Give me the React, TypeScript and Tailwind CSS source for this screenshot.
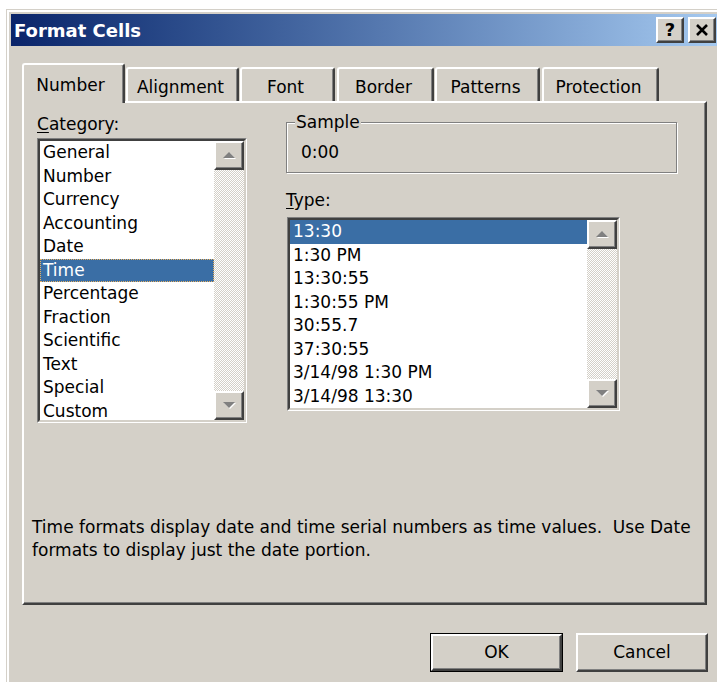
import type { ReactNode } from 'react';

const CATEGORIES = [
  'General',
  'Number',
  'Currency',
  'Accounting',
  'Date',
  'Time',
  'Percentage',
  'Fraction',
  'Scientific',
  'Text',
  'Special',
  'Custom',
];

const TIME_TYPES = [
  '13:30',
  '1:30 PM',
  '13:30:55',
  '1:30:55 PM',
  '30:55.7',
  '37:30:55',
  '3/14/98 1:30 PM',
  '3/14/98 13:30',
];

const TABS = [
  { label: 'Number', width: 'w-[103px]', gap: '' },
  { label: 'Alignment', width: 'w-[113px]', gap: 'ml-[1px]' },
  { label: 'Font', width: 'w-[95px]', gap: 'ml-[1px]' },
  { label: 'Border', width: 'w-[97px]', gap: 'ml-[2px]' },
  { label: 'Patterns', width: 'w-[105px]', gap: 'ml-[1px]' },
  { label: 'Protection', width: 'w-[117px]', gap: 'ml-[2px]' },
];

// classic 3D raised edge used by buttons and scroll arrows
const raised =
  'border-2 border-t-white border-l-white border-r-[#404040] border-b-[#404040] shadow-[inset_-1px_-1px_0_#808080] bg-[#d4d0c8]';

function Arrow({ down }: { down?: boolean }) {
  const pts = down ? '1,1 13,1 7,7' : '1,7 7,1 13,7';
  return (
    <svg width="15" height="9" viewBox="0 0 15 9">
      <polygon points={pts} fill="#ffffff" transform="translate(1,1)" />
      <polygon points={pts} fill="#808080" />
    </svg>
  );
}

function ScrollBar() {
  return (
    <div className="flex w-[30px] flex-col">
      <div className={`${raised} flex h-[29px] items-center justify-center`}>
        <Arrow />
      </div>
      <div className="flex-1 bg-[repeating-conic-gradient(#d4d0c8_0%_25%,#ffffff_0%_50%)] bg-[length:2px_2px]" />
      <div className={`${raised} flex h-[29px] items-center justify-center`}>
        <Arrow down />
      </div>
    </div>
  );
}

function ListBox({
  items,
  selected,
  focused,
  className,
}: {
  items: string[];
  selected: number;
  focused?: boolean;
  className: string;
}) {
  return (
    <div className={`border border-t-[#808080] border-l-[#808080] border-r-white border-b-white ${className}`}>
      <div className="flex h-full border-2 border-t-[#404040] border-l-[#404040] border-r-[#d4d0c8] border-b-[#d4d0c8] bg-white">
        <div className="flex-1 overflow-hidden">
          {items.map((item, i) => (
            <div
              key={item}
              className={`h-[23.5px] whitespace-nowrap pl-[3px] leading-[23.5px] ${
                i === selected ? 'bg-[#3a6ea5] text-white' : ''
              } ${i === selected && focused ? 'outline-1 -outline-offset-1 outline-dotted outline-[#e8b060]' : ''}`}
            >
              {item}
            </div>
          ))}
        </div>
        <ScrollBar />
      </div>
    </div>
  );
}

function Tab({ label, width, gap, active }: { label: string; width: string; gap: string; active?: boolean }) {
  return (
    <div
      className={`${width} ${gap} rounded-t-[3px] border-t-2 border-l-2 border-r-2 border-t-white border-l-white border-r-[#404040] bg-[#d4d0c8] text-center leading-[20px] shadow-[inset_-1px_0_0_#808080] ${
        active ? 'relative z-10 -mb-[2px] h-[40px] pt-[10px] pr-[6px]' : 'h-[34px] pt-[8px] pr-[4px]'
      }`}
    >
      {label}
    </div>
  );
}

function Label({ children }: { children: ReactNode }) {
  return <div className="h-[20px] leading-[20px]">{children}</div>;
}

function TitleButton({ children }: { children: ReactNode }) {
  return <div className={`${raised} flex h-[26px] w-[28px] items-center justify-center`}>{children}</div>;
}

export default function App() {
  return (
    <div className="h-[682px] w-[717px] overflow-hidden bg-white pl-[6px] pt-[9px] font-['DejaVu_Sans',sans-serif] text-[17px] text-black">
      <div className="h-[700px] w-[716px] border-l border-t border-[#d4d0c8] bg-[#d4d0c8]">
        <div className="h-full border-l-2 border-t-2 border-white p-[2px]">
          {/* Title bar */}
          <div className="flex h-[32px] items-center justify-between bg-gradient-to-r from-[#0a246a] to-[#a6caf0] pl-[3px] pr-[4px]">
            <span className="text-[18px] font-bold text-white">Format Cells</span>
            <div className="flex gap-[4px]">
              <TitleButton>
                <span className="text-[18px] leading-none font-bold">?</span>
              </TitleButton>
              <TitleButton>
                <svg width="14" height="12" viewBox="0 0 14 12">
                  <path d="M2 1 L12 11 M12 1 L2 11" stroke="#000" strokeWidth="2.6" />
                </svg>
              </TitleButton>
            </div>
          </div>

          <div className="pl-[11px] pt-[17px]">
            {/* Tabs */}
            <div className="flex h-[38px] items-end">
              {TABS.map((t, i) => (
                <Tab key={t.label} {...t} active={i === 0} />
              ))}
            </div>

            {/* Tab page */}
            <div className="h-[504px] w-[685px] border-2 border-t-white border-l-white border-r-[#404040] border-b-[#404040] pt-[11px] shadow-[inset_-1px_-1px_0_#808080]">
              <div className="flex pl-[13px]">
                <div className="w-[210px]">
                  <Label>
                    <span className="underline underline-offset-2">C</span>ategory:
                  </Label>
                  <ListBox items={CATEGORIES} selected={5} focused className="mt-[4px] h-[285px] w-[210px]" />
                </div>

                <div className="ml-[39px]">
                  <div className="relative mt-[8px] h-[51px] w-[391px] border border-[#808080] pl-[14px] pt-[19px] leading-[20px] shadow-[inset_1px_1px_0_#ffffff,1px_1px_0_#ffffff]">
                    <span className="absolute -top-[11px] left-[8px] bg-[#d4d0c8] px-[1px] leading-[20px]">Sample</span>
                    0:00
                  </div>
                  <div className="mt-[17px]">
                    <Label>
                      <span className="underline underline-offset-2">T</span>ype:
                    </Label>
                  </div>
                  <ListBox items={TIME_TYPES} selected={0} className="ml-[1px] mt-[7px] h-[194px] w-[333px]" />
                </div>
              </div>

              <p className="mt-[93px] pl-[8px] leading-[23px] whitespace-pre">
                {'Time formats display date and time serial numbers as time values.  Use Date\nformats to display just the date portion.'}
              </p>
            </div>

            {/* Dialog buttons */}
            <div className="mt-[28px] flex w-[686px] justify-end gap-[13px]">
              <div className="h-[39px] w-[133px] border border-black">
                <div className={`${raised} flex h-full items-center justify-center`}>OK</div>
              </div>
              <div className={`${raised} flex h-[39px] w-[132px] items-center justify-center`}>Cancel</div>
            </div>
          </div>
        </div>
      </div>
    </div>
  );
}
